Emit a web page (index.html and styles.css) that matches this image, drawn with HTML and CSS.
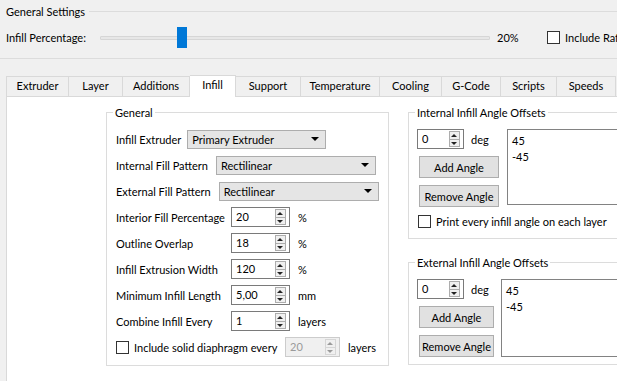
FILE: index.html
```html
<!DOCTYPE html>
<html lang="en">
<head>
  <meta charset="UTF-8" />
  <title>Infill Settings</title>
  <link rel="stylesheet" href="styles.css">
</head>
<body>

  <!-- General Settings -->
  <div class="settings">
    <div class="settings-head">
      <span>General Settings</span>
      <span class="rule"></span>
    </div>
    <div class="slider-row">
      <span class="slider-label">Infill Percentage:</span>
      <div class="slider">
        <div class="track"></div>
        <div class="handle" style="left: 77px;"></div>
      </div>
      <span class="slider-value">20%</span>
      <label class="check"><span class="box"></span>Include Raft</label>
    </div>
  </div>

  <!-- Tabs -->
  <div class="tabs">
    <div class="tab" style="width: 63px;">Extruder</div>
    <div class="tab" style="width: 54px;">Layer</div>
    <div class="tab" style="width: 67px;">Additions</div>
    <div class="tab active" style="width: 46px;">Infill</div>
    <div class="tab" style="width: 65px;">Support</div>
    <div class="tab" style="width: 79px;">Temperature</div>
    <div class="tab" style="width: 62px;">Cooling</div>
    <div class="tab" style="width: 59px;">G-Code</div>
    <div class="tab" style="width: 56px;">Scripts</div>
    <div class="tab" style="width: 59px;">Speeds</div>
  </div>

  <div class="pane">
    <!-- Left: General -->
    <fieldset class="group general">
      <legend>General</legend>

      <div class="row">
        <span>Infill Extruder</span>
        <div class="combo combo-short">Primary Extruder<span class="arrow"></span></div>
      </div>
      <div class="row">
        <span>Internal Fill Pattern</span>
        <div class="combo combo-long">Rectilinear<span class="arrow"></span></div>
      </div>
      <div class="row">
        <span>External Fill Pattern</span>
        <div class="combo combo-long">Rectilinear<span class="arrow"></span></div>
      </div>

      <div class="row">
        <span class="label-fixed">Interior Fill Percentage</span>
        <div class="spin">20<span class="spin-btns"><i class="up"></i><i class="down"></i></span></div>
        <span class="unit">%</span>
      </div>
      <div class="row">
        <span class="label-fixed">Outline Overlap</span>
        <div class="spin">18<span class="spin-btns"><i class="up"></i><i class="down"></i></span></div>
        <span class="unit">%</span>
      </div>
      <div class="row">
        <span class="label-fixed">Infill Extrusion Width</span>
        <div class="spin">120<span class="spin-btns"><i class="up"></i><i class="down"></i></span></div>
        <span class="unit">%</span>
      </div>
      <div class="row">
        <span class="label-fixed">Minimum Infill Length</span>
        <div class="spin">5,00<span class="spin-btns"><i class="up"></i><i class="down"></i></span></div>
        <span class="unit">mm</span>
      </div>
      <div class="row">
        <span class="label-fixed">Combine Infill Every</span>
        <div class="spin">1<span class="spin-btns"><i class="up"></i><i class="down"></i></span></div>
        <span class="unit">layers</span>
      </div>
      <div class="row">
        <label class="check check-wide"><span class="box"></span>Include solid diaphragm every</label>
        <div class="spin spin-disabled">20<span class="spin-btns"><i class="up"></i><i class="down"></i></span></div>
        <span class="unit">layers</span>
      </div>
    </fieldset>

    <!-- Right: angle offsets -->
    <div class="column-right">
      <fieldset class="group angles internal">
        <legend>Internal Infill Angle Offsets</legend>
        <div class="angle-body">
          <div class="angle-controls">
            <div class="deg-row">
              <div class="spin spin-small">0<span class="spin-btns"><i class="up"></i><i class="down"></i></span></div>
              <span>deg</span>
            </div>
            <button class="btn">Add Angle</button>
            <button class="btn">Remove Angle</button>
          </div>
          <div class="list">
            <div>45</div>
            <div>-45</div>
          </div>
        </div>
        <label class="check check-print"><span class="box"></span>Print every infill angle on each layer</label>
      </fieldset>

      <fieldset class="group angles external">
        <legend>External Infill Angle Offsets</legend>
        <div class="angle-body">
          <div class="angle-controls">
            <div class="deg-row">
              <div class="spin spin-small">0<span class="spin-btns"><i class="up"></i><i class="down"></i></span></div>
              <span>deg</span>
            </div>
            <button class="btn">Add Angle</button>
            <button class="btn">Remove Angle</button>
          </div>
          <div class="list">
            <div>45</div>
            <div>-45</div>
          </div>
        </div>
      </fieldset>
    </div>
  </div>

</body>
</html>
```

FILE: styles.css
```css
body {
  margin: 0;
  width: 617px;
  height: 381px;
  overflow: hidden;
  background: #f0f0f0;
  font-family: Lato, "Liberation Sans", sans-serif;
  font-size: 11px;
  color: #000;
}

/* General Settings */
.settings {
  height: 58px;
  border-bottom: 1px solid #dcdcdc;
}
.settings-head {
  display: flex;
  align-items: center;
  padding: 4px 0 0 6px;
  height: 15px;
}
.settings-head .rule {
  flex: 1;
  margin-left: 4px;
  border-top: 1px solid #dcdcdc;
}
.slider-row {
  display: flex;
  align-items: center;
  height: 21px;
  margin-top: 8px;
  padding-left: 6px;
}
.slider-label {
  width: 94px;
  flex-shrink: 0;
}
.slider {
  position: relative;
  width: 390px;
  height: 21px;
  flex-shrink: 0;
}
.track {
  position: absolute;
  left: 0;
  right: 0;
  top: 9px;
  height: 2px;
  background: #e7e7e7;
  border: 1px solid #d6d6d6;
  border-radius: 1px;
}
.handle {
  position: absolute;
  top: 0;
  width: 10px;
  height: 21px;
  background: #0078d7;
}
.slider-value {
  margin-left: 7px;
  width: 50px;
  flex-shrink: 0;
}
.check {
  display: flex;
  align-items: center;
  gap: 5px;
  white-space: nowrap;
  flex-shrink: 0;
}
.check .box {
  width: 11px;
  height: 11px;
  border: 1px solid #333;
  background: #fff;
}

/* Tabs */
.tabs {
  display: flex;
  align-items: flex-end;
  height: 37px;
  padding-left: 6px;
}
.tab {
  box-sizing: border-box;
  height: 20px;
  line-height: 18px;
  text-align: center;
  border: 1px solid #d9d9d9;
  border-left: none;
  border-bottom: none;
  background: #f0f0f0;
  flex-shrink: 0;
}
.tab:first-child {
  border-left: 1px solid #d9d9d9;
}
.tab.active {
  height: 22px;
  background: #fff;
  margin-bottom: -1px;
  position: relative;
}

.pane {
  display: flex;
  gap: 19px;
  margin-left: 6px;
  height: 285px;
  box-sizing: border-box;
  padding: 9px 0 0 99px;
  background: #fff;
  border-top: 1px solid #d9d9d9;
  border-left: 1px solid #d9d9d9;
}

/* Group boxes */
.group {
  margin: 0;
  padding: 0;
  border: 1px solid #dcdcdc;
  min-width: 0;
  box-sizing: border-box;
  flex-shrink: 0;
}
.group legend {
  padding: 0 2px;
  margin-left: 6px;
}
.general {
  width: 283px;
  height: 260px;
  padding-top: 7px;
}
.row {
  display: flex;
  align-items: center;
  gap: 6px;
  height: 26px;
  margin-left: 9px;
  white-space: nowrap;
}
.row > * {
  flex-shrink: 0;
}
.label-fixed {
  width: 109px;
}
.unit {
  margin-left: 2px;
}

.combo {
  position: relative;
  box-sizing: border-box;
  height: 19px;
  line-height: 17px;
  padding-left: 4px;
  background: #e5e5e5;
  border: 1px solid #adadad;
}
.combo-short {
  width: 139px;
}
.combo-long {
  width: 160px;
  margin-left: 2px;
}
.arrow {
  position: absolute;
  right: 6px;
  top: 6px;
  border-left: 4px solid transparent;
  border-right: 4px solid transparent;
  border-top: 4px solid #000;
}

.spin {
  position: relative;
  box-sizing: border-box;
  width: 59px;
  height: 20px;
  line-height: 18px;
  padding-left: 4px;
  background: #fff;
  border: 1px solid #7a7a7a;
}
.spin-btns {
  position: absolute;
  right: 3px;
  top: 1px;
  width: 11px;
  height: 16px;
  display: flex;
  flex-direction: column;
  border: 1px solid #adadad;
  box-sizing: border-box;
  background: #f0f0f0;
}
.spin-btns i {
  flex: 1;
  position: relative;
}
.spin-btns .up {
  border-bottom: 1px solid #adadad;
}
.spin-btns i::after {
  content: "";
  position: absolute;
  left: 1px;
  border-left: 3.5px solid transparent;
  border-right: 3.5px solid transparent;
}
.spin-btns .up::after {
  top: 2px;
  border-bottom: 3px solid #222;
}
.spin-btns .down::after {
  top: 2px;
  border-top: 3px solid #222;
}
.check-wide {
  width: 163px;
}
.spin-disabled {
  width: 55px;
  color: #9a9a9a;
  background: #f0f0f0;
  border-color: #cccccc;
}
.spin-disabled .spin-btns {
  border-color: #d6d6d6;
}
.spin-disabled .spin-btns i::after {
  border-top-color: #9a9a9a;
  border-bottom-color: #9a9a9a;
}
.spin-disabled .spin-btns .up {
  border-bottom-color: #d6d6d6;
}
.spin-small {
  width: 47px;
}

/* Angle offsets */
.column-right {
  display: flex;
  flex-direction: column;
  gap: 17px;
  flex-shrink: 0;
}
.angles {
  width: 230px;
  padding-top: 10px;
}
.internal {
  height: 133px;
}
.external {
  height: 109px;
}
.angle-body {
  display: flex;
  gap: 8px;
  margin-left: 8px;
}
.angle-controls {
  display: flex;
  flex-direction: column;
  gap: 7px;
  width: 82px;
  flex-shrink: 0;
}
.external .angle-body {
  gap: 7px;
}
.external .angle-controls {
  width: 77px;
}
.deg-row {
  display: flex;
  align-items: center;
  gap: 7px;
}
.btn {
  margin-left: 2px;
  height: 22px;
  padding: 0;
  font: inherit;
  white-space: nowrap;
  background: #e1e1e1;
  border: 1px solid #adadad;
  color: #000;
}
.list {
  flex: 1;
  height: 76px;
  padding: 3px 4px;
  box-sizing: border-box;
  background: #fff;
  border: 1px solid #828282;
  line-height: 16px;
}
.external .list {
  height: 78px;
}
.check-print {
  margin: 8px 0 0 9px;
}
```
